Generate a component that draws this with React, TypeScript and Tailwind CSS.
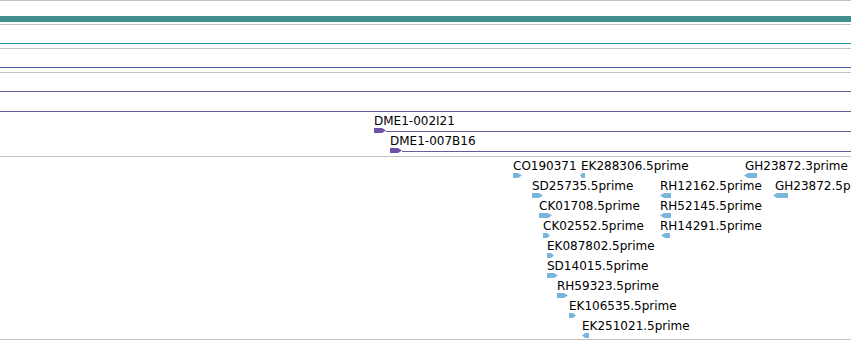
type Feature = {
  name: string;
  x: number;
  row: number;
  w: number;
  dir: "right" | "left";
  glyphX?: number;
};

const dmeFeatures: Feature[] = [
  { name: "DME1-002I21", x: 374, row: 0, w: 12, dir: "right" },
  { name: "DME1-007B16", x: 390, row: 1, w: 12, dir: "right" },
];

const estFeatures: Feature[] = [
  { name: "CO190371", x: 513, row: 0, w: 9, dir: "right" },
  { name: "EK288306.5prime", x: 581, row: 0, w: 5, dir: "left", glyphX: 580 },
  { name: "GH23872.3prime", x: 745, row: 0, w: 13, dir: "left", glyphX: 744 },
  { name: "SD25735.5prime", x: 532, row: 1, w: 11, dir: "right" },
  { name: "RH12162.5prime", x: 660, row: 1, w: 11, dir: "left" },
  { name: "GH23872.5prime", x: 775, row: 1, w: 15, dir: "left", glyphX: 773 },
  { name: "CK01708.5prime", x: 539, row: 2, w: 13, dir: "right" },
  { name: "RH52145.5prime", x: 660, row: 2, w: 11, dir: "left" },
  { name: "CK02552.5prime", x: 543, row: 3, w: 7, dir: "right" },
  { name: "RH14291.5prime", x: 660, row: 3, w: 9, dir: "left", glyphX: 661 },
  { name: "EK087802.5prime", x: 547, row: 4, w: 7, dir: "right" },
  { name: "SD14015.5prime", x: 547, row: 5, w: 11, dir: "right" },
  { name: "RH59323.5prime", x: 557, row: 6, w: 11, dir: "right" },
  { name: "EK106535.5prime", x: 569, row: 7, w: 7, dir: "right" },
  { name: "EK251021.5prime", x: 582, row: 8, w: 7, dir: "left" },
];

const Glyph = ({ w, dir, color }: { w: number; dir: "right" | "left"; color: string }) => {
  const tip = Math.min(4, Math.floor(w / 2));
  const points =
    dir === "right"
      ? `0,0 ${w - tip},0 ${w},2.5 ${w - tip},5 0,5`
      : `${tip},0 ${w},0 ${w},5 ${tip},5 0,2.5`;
  return (
    <svg width={w} height={5} className="block shrink-0">
      <polygon points={points} fill={color} />
    </svg>
  );
};

const FeatureItem = ({ f, color, withLine }: { f: Feature; color: string; withLine?: boolean }) => {
  const gx = f.glyphX ?? f.x;
  const left = Math.min(f.x, gx);
  return (
    <div
      className={withLine ? "absolute right-0 flex flex-col" : "absolute flex flex-col"}
      style={{ left, top: 2 + f.row * 20 }}
    >
      <div className="h-[14px] text-[12px] leading-[14px] whitespace-nowrap text-black" style={{ paddingLeft: f.x - left }}>
        {f.name}
      </div>
      <div className="flex h-[5px] items-start" style={{ paddingLeft: gx - left }}>
        <Glyph w={f.w} dir={f.dir} color={color} />
        {withLine && <div className="mt-[3px] h-px flex-1 bg-[#6b5b9b]" />}
      </div>
    </div>
  );
};

export default function App() {
  return (
    <div className="relative h-[340px] w-[851px] overflow-hidden bg-white font-['DejaVu_Sans',sans-serif]">
      <div className="h-px bg-[#c0c0c0]" />
      <div className="h-[15px]" />
      <div className="h-[6px] bg-[#3f8f8f]" />
      <div className="h-[2px]" />
      <div className="h-[20px] border-t border-b border-t-[#c0c0c0] border-b-[#2d8ea8]" />
      <div className="h-[4px]" />
      <div className="h-[20px] border-t border-b border-t-[#c0c0c0] border-b-[#3b63a8]" />
      <div className="h-[4px]" />
      <div className="h-[20px] border-t border-b border-t-[#c0c0c0] border-b-[#6b5b9b]" />
      <div className="h-[20px] border-b border-b-[#6b5b9b]" />

      <div className="relative h-[44px]">
        {dmeFeatures.map((f) => (
          <FeatureItem key={f.name} f={f} color="#6e54a8" withLine />
        ))}
      </div>
      <div className="h-px bg-[#c0c0c0]" />

      <div className="relative h-[182px]">
        {estFeatures.map((f) => (
          <FeatureItem key={f.name} f={f} color="#7ab5dc" />
        ))}
      </div>
      <div className="h-px bg-[#c0c0c0]" />
    </div>
  );
}
